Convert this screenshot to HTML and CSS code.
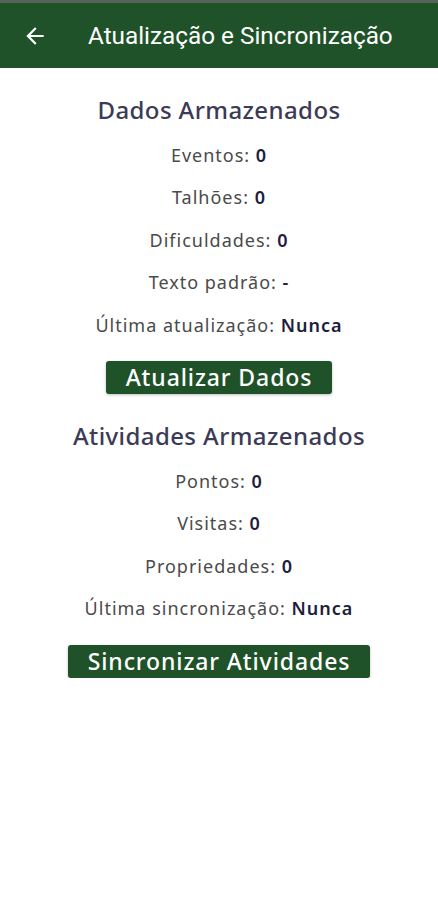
FILE: index.html
```html
<!DOCTYPE html>
<html lang="pt-BR">
<head>
  <meta charset="UTF-8" />
  <title>Atualização e Sincronização</title>
  <link rel="stylesheet" href="styles.css">
</head>
<body>
  <header class="topbar">
    <button class="back" aria-label="Voltar">
      <svg width="24" height="24" viewBox="0 0 24 24"><path d="M20 11H7.83l5.59-5.59L12 4l-8 8 8 8 1.41-1.41L7.83 13H20v-2z" fill="#fff"/></svg>
    </button>
    <h1>Atualização e Sincronização</h1>
  </header>

  <main class="content">
    <section class="block">
      <h2>Dados Armazenados</h2>
      <p class="row">Eventos: <b>0</b></p>
      <p class="row">Talhões: <b>0</b></p>
      <p class="row">Dificuldades: <b>0</b></p>
      <p class="row">Texto padrão: <b>-</b></p>
      <p class="row">Última atualização: <b>Nunca</b></p>
      <button class="action">Atualizar Dados</button>
    </section>

    <section class="block">
      <h2>Atividades Armazenados</h2>
      <p class="row">Pontos: <b>0</b></p>
      <p class="row">Visitas: <b>0</b></p>
      <p class="row">Propriedades: <b>0</b></p>
      <p class="row">Última sincronização: <b>Nunca</b></p>
      <button class="action">Sincronizar Atividades</button>
    </section>
  </main>
</body>
</html>
```

FILE: styles.css
```css
body {
  margin: 0;
  background: #fff;
  font-family: 'Noto Sans', sans-serif;
  color: #444;
}

.topbar {
  display: flex;
  align-items: center;
  height: 65px;
  border-top: 3px solid #56625a;
  background: #1f5229;
  color: #fff;
}

.back {
  display: flex;
  align-items: center;
  justify-content: center;
  width: 26px;
  height: 26px;
  margin-left: 22px;
  padding: 0;
  background: none;
  border: none;
}

.back svg {
  width: 26px;
  height: 26px;
}

.topbar h1 {
  margin: 0 0 0 40px;
  font-family: 'Roboto', sans-serif;
  font-size: 24.3px;
  font-weight: 400;
}

.content {
  padding-top: 18px;
}

.block {
  display: flex;
  flex-direction: column;
  align-items: center;
}

.block + .block {
  margin-top: 18px;
}

.block h2 {
  margin: 0;
  line-height: 47.5px;
  font-size: 24px;
  font-weight: 500;
  letter-spacing: 0.4px;
  color: #3b3b55;
}

.row {
  margin: 0;
  line-height: 42.5px;
  font-size: 18px;
  letter-spacing: 1px;
  color: #4a4a4a;
}

.row b {
  font-weight: 600;
  color: #1e1e3c;
}

.action {
  margin-top: 15px;
  height: 33px;
  padding: 0 20px;
  font-family: 'Noto Sans', sans-serif;
  font-size: 23px;
  font-weight: 500;
  letter-spacing: 0.9px;
  line-height: 33px;
  color: #fff;
  background: #1f5229;
  border: none;
  border-radius: 3px;
  box-shadow: 0 1px 3px rgba(0,0,0,0.25);
  cursor: pointer;
}
```
